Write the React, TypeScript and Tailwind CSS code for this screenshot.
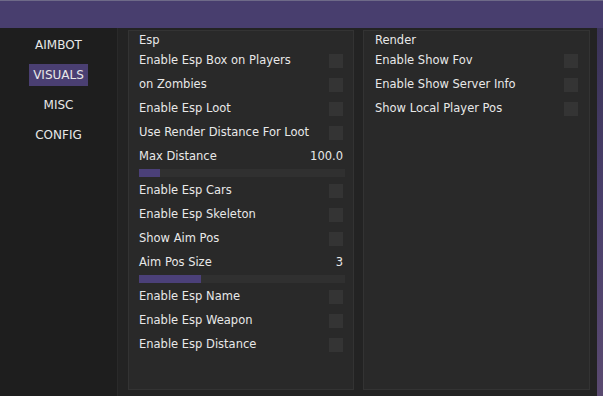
import React from "react";

const font = { fontFamily: '"DejaVu Sans", Verdana, sans-serif' };

function Check() {
  return <div className="w-[14px] h-[14px] bg-[#343434] shrink-0" />;
}

function Row({ label }: { label: string }) {
  return (
    <div className="h-[24px] flex items-center justify-between">
      <span>{label}</span>
      <Check />
    </div>
  );
}

function Slider({ label, value, fill }: { label: string; value: string; fill: number }) {
  return (
    <div>
      <div className="h-[24px] flex items-center justify-between">
        <span>{label}</span>
        <span>{value}</span>
      </div>
      <div className="h-[8px] bg-[#303030] mb-[2px] mr-[-2px]">
        <div className="h-full bg-[#4b4079]" style={{ width: fill }} />
      </div>
    </div>
  );
}

export default function App() {
  const nav = ["AIMBOT", "VISUALS", "MISC", "CONFIG"];
  return (
    <div
      className="w-[603px] h-[396px] flex flex-col bg-[#1f1f1f] text-[#e8e8e8] text-[11.5px] overflow-hidden"
      style={font}
    >
      <div className="h-[28px] bg-[#483e6e] shrink-0 border-t border-[#6e6a88]" />
      <div className="flex-1 flex">
        <div className="flex-1 flex bg-[#232323]">
          <div className="w-[118px] bg-[#1e1e1e] border-r border-[#2a2a2a] flex flex-col items-center pt-[6px] gap-[8px] text-[12px]">
            {nav.map((n) => (
              <div
                key={n}
                className={
                  "h-[22px] px-[4px] flex items-center " +
                  (n === "VISUALS" ? "bg-[#4a3f72]" : "")
                }
              >
                {n}
              </div>
            ))}
          </div>
          <div className="flex-1 flex gap-[9px] pl-[10px] pr-[6px] pt-[2px] pb-[6px]">
            <div className="w-[226px] bg-[#292929] border border-[#333333] px-[10px]">
              <div className="h-[18px] leading-[18px]">Esp</div>
              <Row label="Enable Esp Box on Players" />
              <Row label="on Zombies" />
              <Row label="Enable Esp Loot" />
              <Row label="Use Render Distance For Loot" />
              <Slider label="Max Distance" value="100.0" fill={21} />
              <Row label="Enable Esp Cars" />
              <Row label="Enable Esp Skeleton" />
              <Row label="Show Aim Pos" />
              <Slider label="Aim Pos Size" value="3" fill={62} />
              <Row label="Enable Esp Name" />
              <Row label="Enable Esp Weapon" />
              <Row label="Enable Esp Distance" />
            </div>
            <div className="w-[227px] bg-[#292929] border border-[#333333] pl-[11px] pr-[11px]">
              <div className="h-[18px] leading-[18px]">Render</div>
              <Row label="Enable Show Fov" />
              <Row label="Enable Show Server Info" />
              <Row label="Show Local Player Pos" />
            </div>
          </div>
        </div>
        <div className="w-[6px] bg-gradient-to-b from-[#3b3458] via-[#4a3f6b] to-[#5a4a70]" />
      </div>
    </div>
  );
}
